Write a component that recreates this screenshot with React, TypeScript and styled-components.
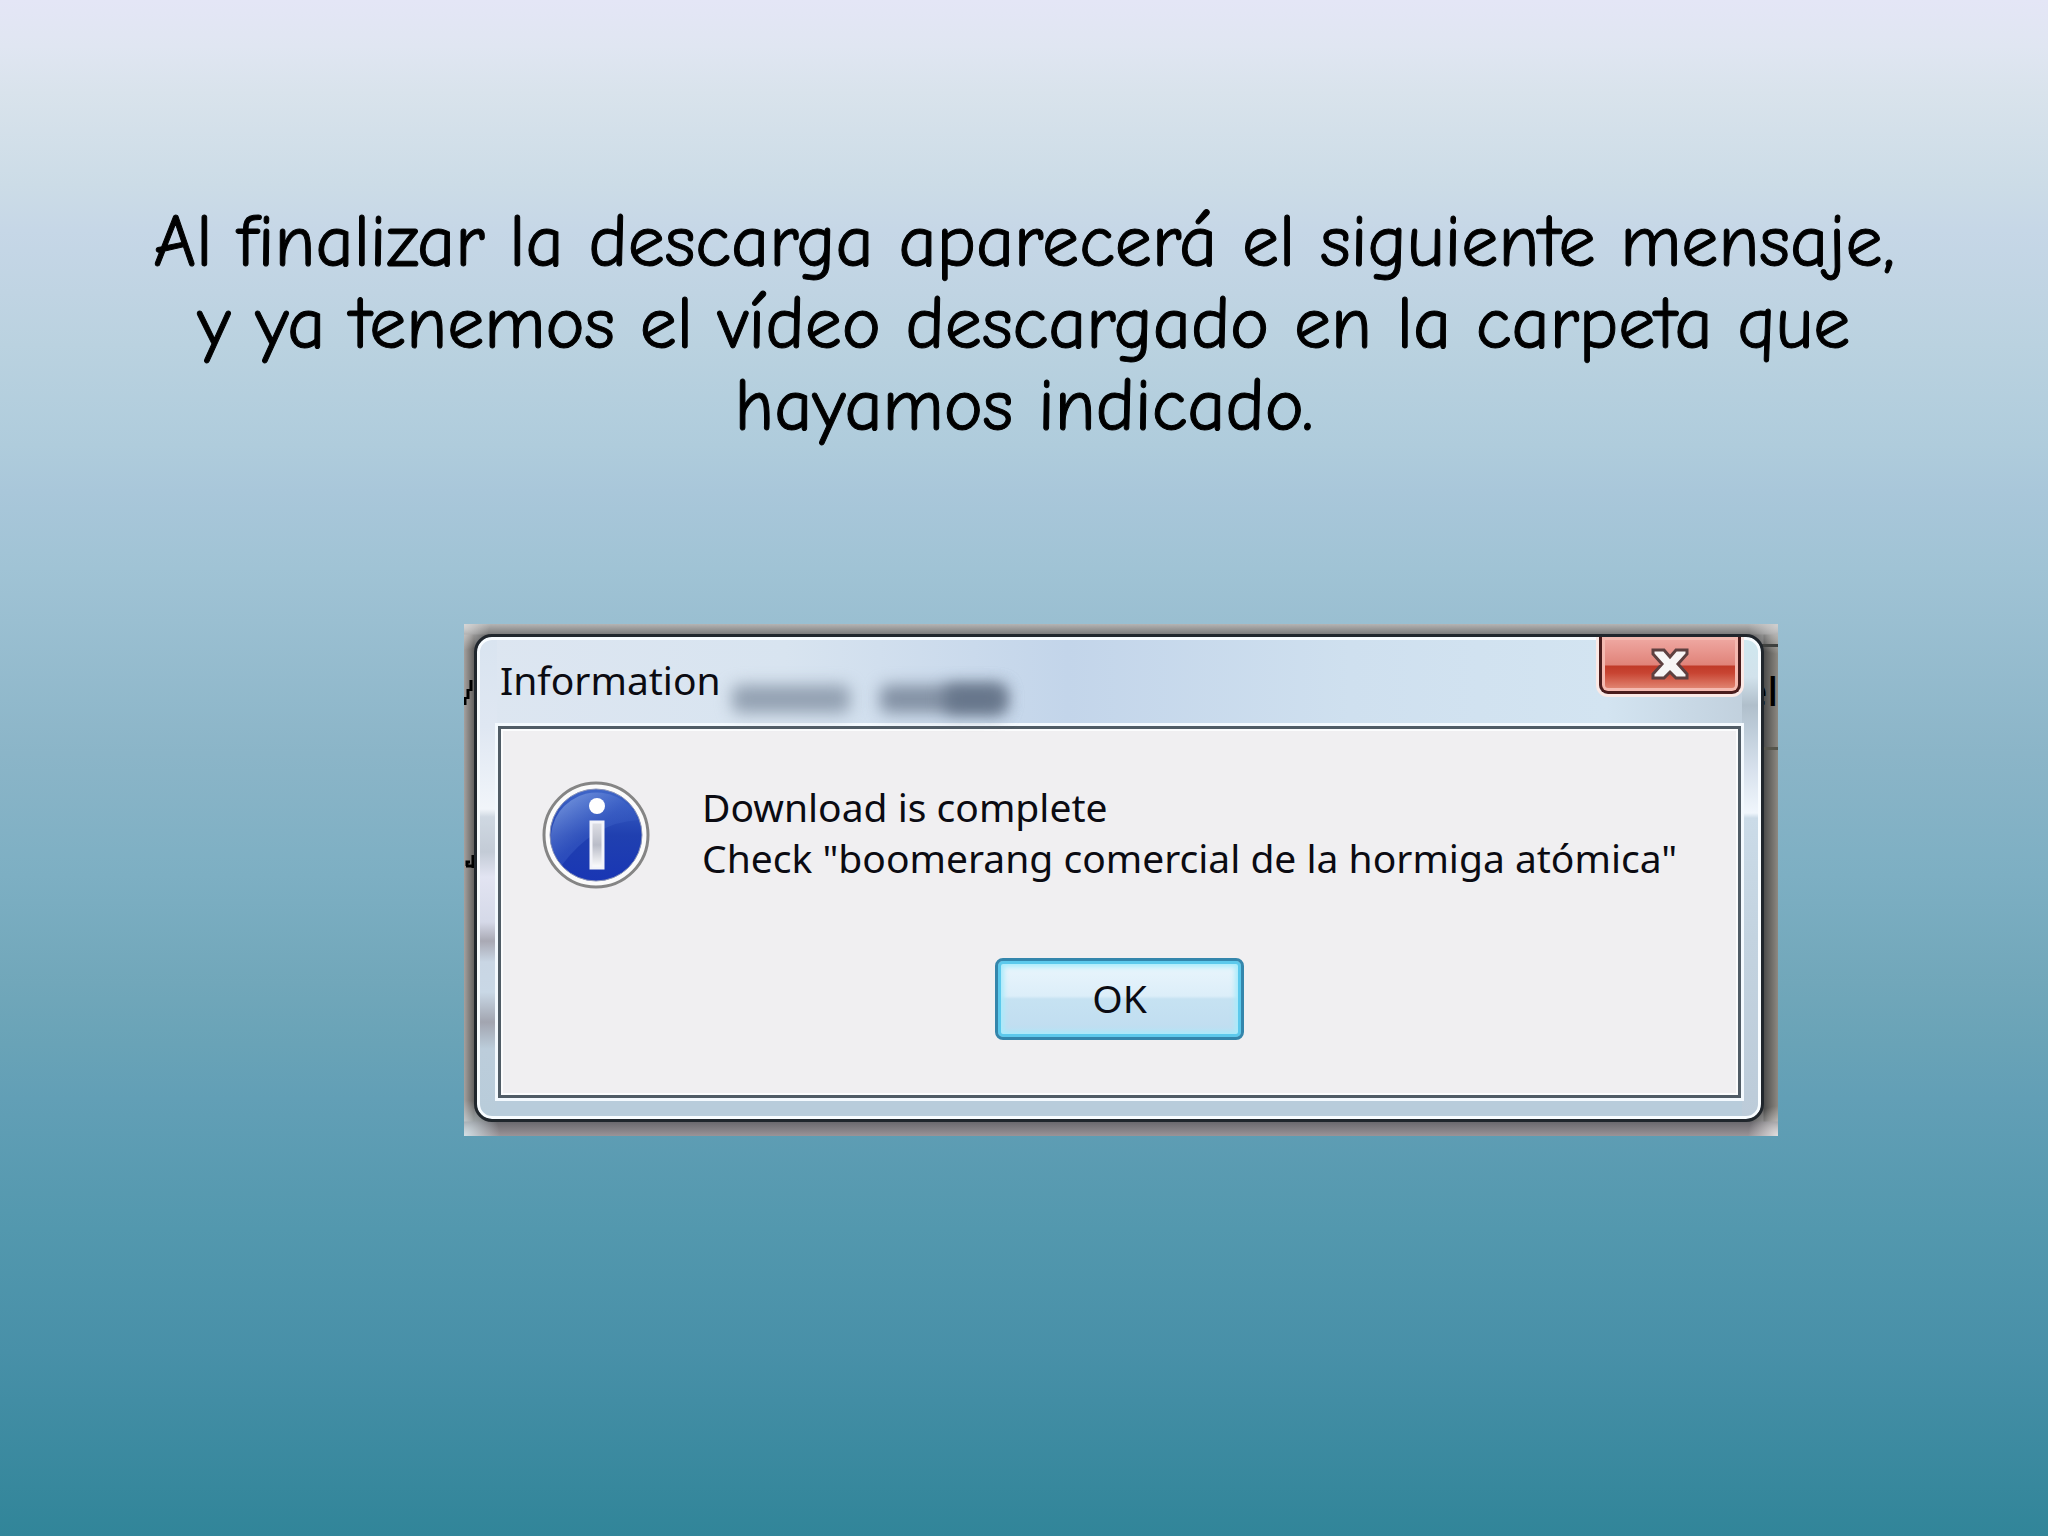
import React from "react";
import styled, { createGlobalStyle } from "styled-components";

const GlobalStyle = createGlobalStyle`
  *, *::before, *::after { box-sizing: border-box; }
  body { margin: 0; }
`;

const uiFont = `"Segoe UI", "Noto Sans", "Open Sans", sans-serif`;

const Slide = styled.main`
  min-height: 100vh;
  padding: 201px 0 0;
  overflow: hidden;
  background: linear-gradient(
    180deg,
    #e4e6f6 0%, #e0e6f2 3%, #d9e3ec 6%, #ccdce7 12%, #c6d7e7 15%,
    #c0d4e3 19%, #bad2e0 22.5%, #afccdc 29%, #a9c7da 32%, #a0c3d5 37%,
    #8bb5c8 49%, #7dafc3 57%, #71a7ba 64%, #69a3b7 68%, #629fb6 71.5%,
    #5398ae 80%, #4890a8 88%, #318599 100%
  );
`;

const Message = styled.h1`
  margin: 0;
  padding: 0 64px;
  text-align: center;
  font: 400 74px/82px "Comic Sans MS", "Comic Neue", "Noto Sans", sans-serif;
  font-feature-settings: "liga" 0, "clig" 0, "dlig" 0, "calt" 0;
  -webkit-text-stroke: 1px #000;
  color: #000;
`;

const Line = styled.span`
  display: block;
`;

const Capture = styled.figure`
  position: relative;
  margin: 177px 270px 0 464px;
  padding: 10px 14px 14px 10px;
  overflow: hidden;
  background:
    radial-gradient(circle at 0 0, #d6d6d6 0, transparent 26px),
    radial-gradient(circle at 100% 0, #cfcfcf 0, transparent 30px),
    radial-gradient(circle at 0 100%, #d3e0e6 0, transparent 36px),
    radial-gradient(circle at 100% 100%, #e0dede 0, transparent 30px),
    linear-gradient(180deg, #b4b4b4 0, #7c7c7c 10px, transparent 11px),
    linear-gradient(0deg, #9a9498 0, #6b696e 14px, transparent 15px),
    linear-gradient(90deg, #a5a19f 0, #63615f 10px, transparent 11px),
    linear-gradient(270deg, #8d8982 0, #4c4c4b 14px, transparent 15px),
    #666;
`;

const EdgeMarks = styled.svg`
  position: absolute;
  left: 0;
  top: 0;
  width: 10px;
  height: 260px;
`;

const EdgeCell = styled.span`
  position: absolute;
  right: 0;
  top: 20px;
  width: 48px;
  height: 106px;
  border-top: 3px solid #3f413f;
  border-bottom: 3px solid #56554c;
  font: 500 39px/88px ${uiFont};
  color: #000;
  text-align: right;
`;

const Dialog = styled.section`
  position: relative;
  padding: 0 20px 21px 21px;
  border: 3px solid #20262c;
  border-radius: 18px;
  box-shadow: inset 0 0 0 3px #f8fcff;
  font: 400 39px/51px ${uiFont};
  color: #0b0b12;
  background:
    linear-gradient(180deg, #d9e4f0 0, #dfe7f2 90px, #f1f5fa 172px, #cfd8e2 180px,
      #c3cbd6 215px, #e2e4f2 240px, #d5d9e8 285px, #a9a9b4 304px, #c9d6e4 325px,
      #c9d8e6 355px, #a2a5b0 385px, #bccddb 412px, #b8ccda 100%) 0 0 / 20px 100% no-repeat,
    linear-gradient(180deg, #cfe8ef 0, #d2e2ec 40px, #b0bfcb 68px, #bccbd8 90px,
      #d6e0ec 130px, #f0f6fc 176px, #cbdbe8 181px, #c3d3e0 300px, #bccbd9 100%) 100% 0 / 19px 100% no-repeat,
    linear-gradient(90deg, #dde6f1 0, #d8e4f0 24%, #c3d5ea 46%, #cfe0ef 68%, #d3e4f1 88%, #bfcedb 100%) 0 0 / 100% 90px no-repeat,
    #b8ccdb;
  background-clip: padding-box;
`;

const TitleBar = styled.header`
  position: relative;
  display: flex;
  justify-content: space-between;
  align-items: flex-start;
  height: 89px;
`;

const Title = styled.h2`
  position: relative;
  margin: 17px 0 0;
  padding-left: 2px;
  font: inherit;
`;

const Ghost = styled.span<{ $left: number; $width: number; $tone: string }>`
  position: absolute;
  left: ${(p) => p.$left}px;
  top: 48px;
  width: ${(p) => p.$width}px;
  height: 28px;
  border-radius: 8px;
  background: ${(p) => p.$tone};
  filter: blur(8px);
`;

const CloseButton = styled.button`
  display: flex;
  justify-content: center;
  width: 142px;
  height: 57px;
  padding: 9px 0 0;
  border: 3px solid #4a1c1c;
  border-top: 0;
  border-radius: 0 0 9px 9px;
  box-shadow: 0 0 0 3px #fbe9e6, inset 0 0 0 3px #f4b9b0;
  clip-path: inset(0 -3px -3px -3px);
  background: linear-gradient(180deg, #f0aaa4 0, #e08379 28px, #c03a28 29px, #c84432 36px, #e58f7c 100%);
`;

const CloseGlyph = styled.svg`
  width: 42px;
  height: 36px;
`;

const Body = styled.div`
  display: flex;
  flex-direction: column;
  align-items: center;
  padding: 52px 41px 55px;
  border: 3px solid #505c66;
  box-shadow: 0 0 0 3px #f3f9fe, inset 0 0 0 2px #fbfcfd;
  background: #f0eff1;
`;

const Notice = styled.div`
  display: flex;
  align-self: stretch;
  gap: 52px;
`;

const InfoIcon = styled.svg`
  flex: none;
  width: 108px;
  height: 108px;
`;

const NoticeText = styled.p`
  margin: 0;
  white-space: nowrap;
`;

const OkButton = styled.button`
  width: 249px;
  height: 82px;
  margin-top: 69px;
  padding: 0 0 4px;
  border: 3px solid #3486ac;
  border-radius: 8px;
  box-shadow: inset 0 0 0 3px #5cc9ec, inset 0 0 5px 6px #a9ebfb;
  background: linear-gradient(180deg, #eaf5fc 0, #dceef9 46%, #c6e2f2 50%, #bfdcf0 100%);
  font: inherit;
  color: inherit;
`;

export default function App() {
  return (
    <>
      <GlobalStyle />
      <Slide>
        <Message>
          <Line>Al finalizar la descarga aparecerá el siguiente mensaje,</Line>
          <Line>y ya tenemos el vídeo descargado en la carpeta que</Line>
          <Line>hayamos indicado.</Line>
        </Message>
        <Capture>
          <EdgeMarks viewBox="0 0 10 260" aria-hidden="true">
            <path d="M1 81V73M4 75V65M7 67V56" stroke="#000" strokeWidth="3" fill="none" />
            <path d="M9 231V244M2 242H10M3 242V238H6" stroke="#000" strokeWidth="3" fill="none" />
          </EdgeMarks>
          <EdgeCell>el</EdgeCell>
          <Dialog role="dialog" aria-labelledby="dialog-title">
            <TitleBar>
              <Ghost $left={234} $width={118} $tone="#93a1b2" />
              <Ghost $left={382} $width={126} $tone="#8391a4" />
              <Ghost $left={446} $width={62} $tone="#66758a" />
              <Title id="dialog-title">Information</Title>
              <CloseButton type="button" aria-label="Close">
                <CloseGlyph viewBox="0 0 42 36" aria-hidden="true">
                  <path
                    d="M4 4H15L21 11L27 4H38V8L29 18L38 28V32H27L21 26L15 32H4V28L13 18L4 8Z"
                    fill="#f7f5f5"
                    stroke="#5d4040"
                    strokeWidth="3"
                  />
                </CloseGlyph>
              </CloseButton>
            </TitleBar>
            <Body>
              <Notice>
                <InfoIcon viewBox="0 1 108 108" aria-hidden="true">
                  <defs>
                    <linearGradient id="ball" x1="0" y1="0" x2="0" y2="1">
                      <stop offset="0" stopColor="#3f66c8" />
                      <stop offset="0.5" stopColor="#2040b0" />
                      <stop offset="1" stopColor="#1936b4" />
                    </linearGradient>
                    <linearGradient id="shine" x1="0" y1="0" x2="1" y2="1">
                      <stop offset="0" stopColor="#a4c0f0" stopOpacity="0.7" />
                      <stop offset="0.5" stopColor="#4468cc" stopOpacity="0.4" />
                      <stop offset="1" stopColor="#3458c0" stopOpacity="0.1" />
                    </linearGradient>
                    <linearGradient id="stem" x1="0" y1="0" x2="0" y2="1">
                      <stop offset="0" stopColor="#dfe0e6" />
                      <stop offset="0.5" stopColor="#b9bcc8" />
                      <stop offset="1" stopColor="#ffffff" />
                    </linearGradient>
                  </defs>
                  <circle cx="54" cy="55" r="52" fill="#fbfbfb" stroke="#858585" strokeWidth="3" />
                  <circle cx="54" cy="55" r="46" fill="url(#ball)" stroke="#8a94b8" strokeWidth="1" />
                  <path d="M9 62A46 46 0 0 1 97 40Q52 42 20 85A46 46 0 0 1 9 62Z" fill="url(#shine)" />
                  <circle cx="55" cy="26" r="8" fill="#fff" />
                  <rect x="49" y="42" width="12" height="46" fill="url(#stem)" stroke="#f3f4fa" strokeWidth="3" />
                </InfoIcon>
                <NoticeText>
                  Download is complete
                  <br />
                  Check "boomerang comercial de la hormiga atómica"
                </NoticeText>
              </Notice>
              <OkButton type="button">OK</OkButton>
            </Body>
          </Dialog>
        </Capture>
      </Slide>
    </>
  );
}
